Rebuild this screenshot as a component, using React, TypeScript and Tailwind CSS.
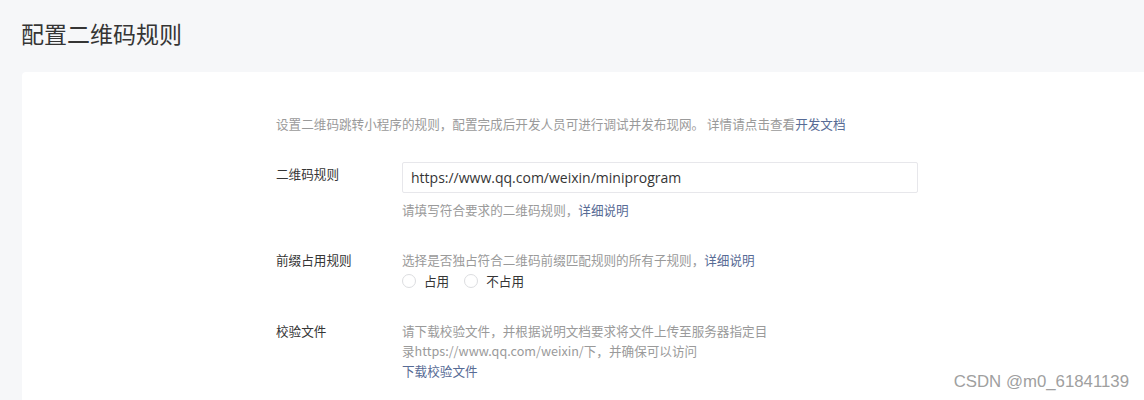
import React from "react";

const cjk = "font-['Noto_Sans_CJK_SC',sans-serif]";

function Radio({ label }: { label: string }) {
  return (
    <label className="flex items-center gap-[8px]">
      <span className="w-[14px] h-[14px] rounded-full border border-[#dcdde0] bg-white" />
      <span className="text-[#353535]">{label}</span>
    </label>
  );
}

export default function App() {
  return (
    <div className={`w-[1144px] h-[400px] overflow-hidden bg-[#f6f7f9] relative ${cjk}`}>
      <div className="h-[72px] pl-[21px] pt-[17px]">
        <h1 className="text-[23px] leading-[32px] text-[#353535] font-normal">配置二维码规则</h1>
      </div>
      <div className="ml-[22px] bg-white rounded-tl-[4px] h-[328px] pl-[254px] text-[12.6px] leading-[20px]">
        <div className="pt-[42px] text-[#9a9a9a]">
          设置二维码跳转小程序的规则，配置完成后开发人员可进行调试并发布现网。 详情请点击查看
          <span className="text-[#576b95]">开发文档</span>
        </div>

        <div className="flex mt-[28px]">
          <div className="w-[126px] pt-[2px] text-[#353535]">二维码规则</div>
          <div className="flex flex-col">
            <div className="w-[516px] h-[31px] border border-[#e7e7eb] rounded-[2px] px-[8px] flex items-center text-[14px] text-[#353535] font-['Open_Sans',sans-serif]">
              https://www.qq.com/weixin/miniprogram
            </div>
            <div className="mt-[7px] text-[#9a9a9a]">
              请填写符合要求的二维码规则，<span className="text-[#576b95]">详细说明</span>
            </div>
          </div>
        </div>

        <div className="flex mt-[30px]">
          <div className="w-[126px] text-[#353535]">前缀占用规则</div>
          <div className="flex flex-col">
            <div className="text-[#9a9a9a]">
              选择是否独占符合二维码前缀匹配规则的所有子规则，<span className="text-[#576b95]">详细说明</span>
            </div>
            <div className="flex gap-[15px] mt-[1px]">
              <Radio label="占用" />
              <Radio label="不占用" />
            </div>
          </div>
        </div>

        <div className="flex mt-[30px]">
          <div className="w-[126px] text-[#353535]">校验文件</div>
          <div className="flex flex-col text-[#9a9a9a]">
            <div>请下载校验文件，并根据说明文档要求将文件上传至服务器指定目</div>
            <div>录https://www.qq.com/weixin/下，并确保可以访问</div>
            <div className="text-[#576b95]">下载校验文件</div>
          </div>
        </div>
      </div>
      <div className="absolute right-[15px] bottom-[8px] text-[16.8px] leading-[20px] text-[#a0a0a0] font-['Liberation_Sans',sans-serif] [text-shadow:0_0_2px_#fff]">
        CSDN @m0_61841139
      </div>
    </div>
  );
}
